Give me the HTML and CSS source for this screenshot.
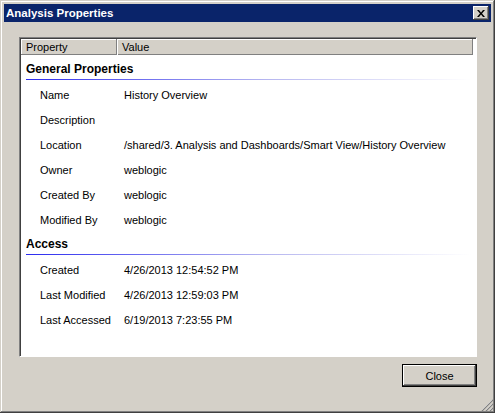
FILE: index.html
```html
<!DOCTYPE html>
<html lang="en">
<head>
    <meta charset="UTF-8">
    <title>Analysis Properties</title>
    <link rel="stylesheet" href="styles.css">
</head>
<body>
    <div class="window">
        <div class="titlebar">
            <span class="title">Analysis Properties</span>
            <button class="close-x" type="button">
                <svg width="8" height="7" viewBox="0 0 8 7"><path d="M0 0h2l2 2.5 2-2.5h2l-3 3.5 3 3.5h-2l-2-2.5-2 2.5h-2l3-3.5z" fill="#000"/></svg>
            </button>
        </div>

        <div class="content">
            <div class="panel">
                <div class="list-header">
                    <div class="col col-prop">Property</div>
                    <div class="col col-value">Value</div>
                </div>

                <div class="section-title">General Properties</div>
                <div class="rule"></div>
                <div class="rows">
                    <div class="row"><span class="label">Name</span><span class="value">History Overview</span></div>
                    <div class="row"><span class="label">Description</span><span class="value"></span></div>
                    <div class="row"><span class="label">Location</span><span class="value">/shared/3. Analysis and Dashboards/Smart View/History Overview</span></div>
                    <div class="row"><span class="label">Owner</span><span class="value">weblogic</span></div>
                    <div class="row"><span class="label">Created By</span><span class="value">weblogic</span></div>
                    <div class="row"><span class="label">Modified By</span><span class="value">weblogic</span></div>
                </div>

                <div class="section-title second">Access</div>
                <div class="rule"></div>
                <div class="rows">
                    <div class="row"><span class="label">Created</span><span class="value">4/26/2013 12:54:52 PM</span></div>
                    <div class="row"><span class="label">Last Modified</span><span class="value">4/26/2013 12:59:03 PM</span></div>
                    <div class="row"><span class="label">Last Accessed</span><span class="value">6/19/2013 7:23:55 PM</span></div>
                </div>
            </div>

            <div class="footer">
                <button class="btn" type="button">Close</button>
            </div>
        </div>

        <svg class="grip" width="12" height="12" viewBox="0 0 12 12">
            <path d="M11 1L1 11M11 5L5 11M11 9L9 11" stroke="#fff" stroke-width="1"/>
            <path d="M12 1L1 12M12 5L5 12M12 9L9 12" stroke="#808080" stroke-width="1.2"/>
        </svg>
    </div>
</body>
</html>
```

FILE: styles.css
```css
body {
    margin: 0;
    font-family: "Liberation Sans", Arial, sans-serif;
    font-size: 11px;
    color: #000;
    background: #d4d0c8;
}

.window {
    position: relative;
    width: 495px;
    height: 413px;
    box-sizing: border-box;
    padding: 4px;
    background: #d4d0c8;
    display: flex;
    flex-direction: column;
    box-shadow: inset -1px -1px 0 #404040, inset 1px 1px 0 #d4d0c8,
                inset -2px -2px 0 #808080, inset 2px 2px 0 #fff;
}

.titlebar {
    height: 18px;
    background: #0a246a;
    display: flex;
    align-items: center;
    justify-content: space-between;
    padding: 0 2px;
}

.title {
    color: #fff;
    font-weight: bold;
    font-size: 11.5px;
}

.close-x {
    width: 16px;
    height: 14px;
    padding: 0;
    border: none;
    background: #d4d0c8;
    display: flex;
    align-items: center;
    justify-content: center;
    box-shadow: inset -1px -1px 0 #404040, inset 1px 1px 0 #fff,
                inset -2px -2px 0 #808080;
}

.content {
    flex: 1;
    display: flex;
    flex-direction: column;
    padding: 15px 14px 0 15px;
}

.panel {
    height: 320px;
    box-sizing: border-box;
    background: #fff;
    border-top: 1px solid #808080;
    border-left: 1px solid #808080;
    border-right: 1px solid #fff;
    border-bottom: 1px solid #fff;
    box-shadow: inset 1px 1px 0 #404040;
    padding: 1px 0 0 1px;
}

.list-header {
    display: flex;
    height: 16px;
    margin-right: 3px;
    background: #d4d0c8;
    box-shadow: inset -1px -1px 0 #808080, inset 1px 1px 0 #fff;
}

.col {
    line-height: 16px;
    padding-left: 5px;
}

.col-prop {
    width: 91px;
    box-shadow: inset -1px 0 0 #808080;
}

.col-value {
    flex: 1;
    box-shadow: inset 1px 0 0 #fff;
}

.section-title {
    font-weight: bold;
    font-size: 12px;
    line-height: 16px;
    padding: 6px 0 2px 5px;
}

.section-title.second {
    padding-top: 3px;
    padding-bottom: 2px;
}

.rule {
    height: 1px;
    margin: 0 5px 0 5px;
    background: linear-gradient(to right, #2b2bf0, #b8b8f0 55%, #fff);
}

.rows {
    padding-top: 3px;
}

.row {
    display: flex;
    height: 25px;
    line-height: 25px;
}

.label {
    width: 84px;
    padding-left: 19px;
}

.footer {
    display: flex;
    justify-content: flex-end;
    padding-top: 7px;
}

.btn {
    width: 75px;
    height: 23px;
    font-family: "Liberation Sans", Arial, sans-serif;
    font-size: 11px;
    background: #d4d0c8;
    border: 1px solid #000;
    padding: 0;
    box-shadow: inset -1px -1px 0 #404040, inset 1px 1px 0 #fff,
                inset -2px -2px 0 #808080;
}

.grip {
    position: absolute;
    right: 2px;
    bottom: 2px;
}
```
